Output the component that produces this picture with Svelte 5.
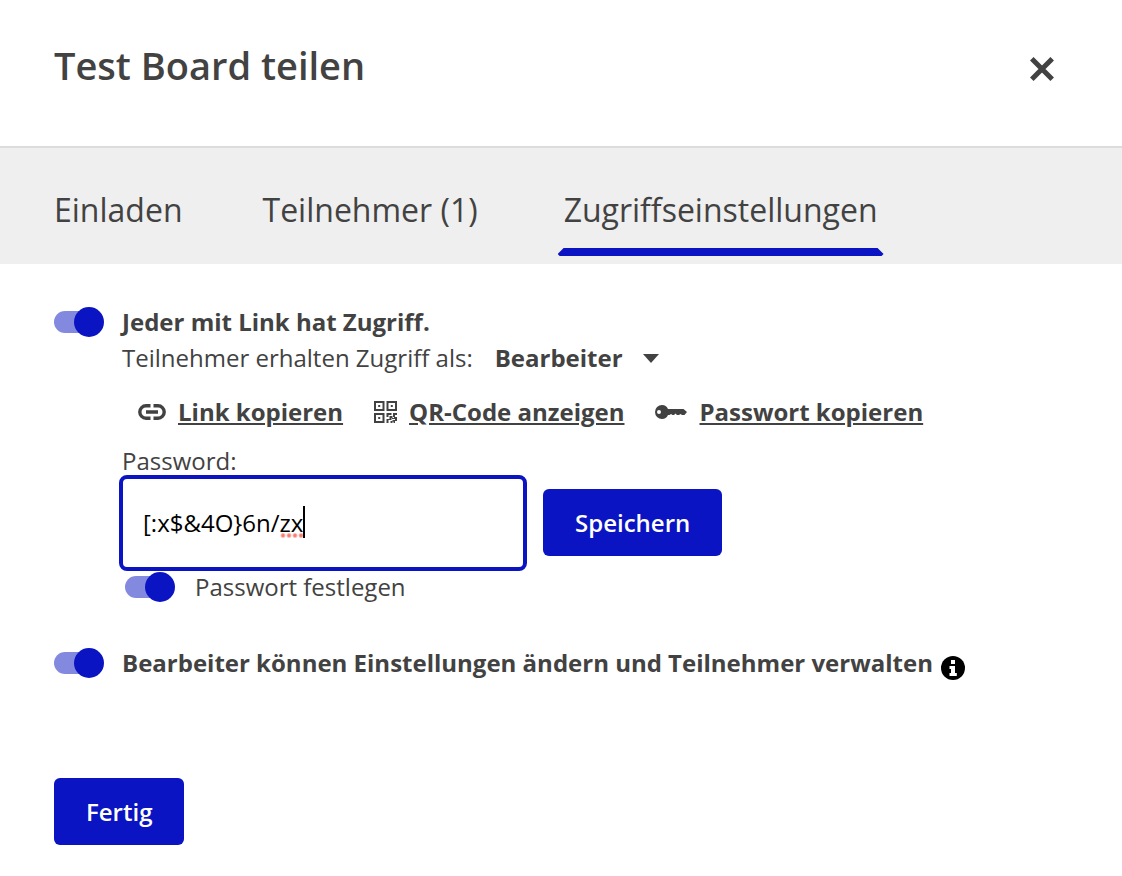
<script>
  const tabs = ['Einladen', 'Teilnehmer (1)', 'Zugriffseinstellungen'];
  let activeTab = $state('Zugriffseinstellungen');
  let linkAccess = $state(true);
  let role = $state('Bearbeiter');
  let password = $state('[:x$&4O}6n/zx');
  let passwordEnabled = $state(true);
  let editorsManage = $state(true);

  // The last word of the value carries the spelling mark.
  let lastWord = $derived(password.match(/[a-z]*$/)[0]);
  let leading = $derived(password.slice(0, password.length - lastWord.length));
</script>

<main class="dialog">
  <header class="head">
    <h1>Test Board teilen</h1>
    <button class="close" type="button" aria-label="Schließen">
      <svg viewBox="0 0 24 24" width="24" height="24" aria-hidden="true">
        <path d="M1.8 1.8 22.2 22.2M22.2 1.8 1.8 22.2" stroke="currentColor" stroke-width="5" fill="none" />
      </svg>
    </button>
  </header>

  <nav class="tabs">
    {#each tabs as tab}
      <button type="button" class="tab" class:active={tab === activeTab} onclick={() => (activeTab = tab)}>{tab}</button>
    {/each}
  </nav>

  <section class="content">
    <div class="setting">
      <input id="link-access" class="switch" type="checkbox" bind:checked={linkAccess} />
      <div class="body">
        <label class="line strong" for="link-access">Jeder mit Link hat Zugriff.</label>
        <div class="line role">
          <label for="role">Teilnehmer erhalten Zugriff als:</label>
          <span class="picker">
            <select id="role" bind:value={role}>
              <option>Bearbeiter</option>
              <option>Leser</option>
            </select>
            <svg viewBox="0 0 16 9" width="16" height="9" aria-hidden="true"><path d="M0 0h16L8 9z" fill="currentColor" /></svg>
          </span>
        </div>

        <div class="links">
          <a href="#link">
            <svg viewBox="0 0 28 16" width="28" height="16" aria-hidden="true">
              <path d="M12.5 1.8H8a6.2 6.2 0 0 0 0 12.4h4.5M15.5 1.8H20a6.2 6.2 0 0 1 0 12.4h-4.5M8 8h12" fill="none" stroke="currentColor" stroke-width="3.4" />
            </svg>
            <span>Link kopieren</span>
          </a>
          <a href="#qr">
            <svg viewBox="0 0 23 22" width="23" height="22" aria-hidden="true">
              <path d="M1 1h8.500v8H1zM13.500 1H22v8h-8.500zM1 13h8.500v8H1z" fill="none" stroke="currentColor" stroke-width="2" />
              <path fill="currentColor" d="M4.200 4h2v2h-2zM16.800 4h2v2h-2zM4.200 16h2v2h-2zM12.500 12h5v2h-3v2h-2zM19 12h4v2h-2v2h-2zM15.500 15h3v2h-1v2h-3v3h-2v-4h3zM20 16h3v4h-2v-2h-3v-1h2zM16.500 20h2v2h-2zM18.500 19h2.500v3h-1.500v-1.500h-1z" />
            </svg>
            <span>QR-Code anzeigen</span>
          </a>
          <a href="#password">
            <svg viewBox="0 0 32 14" width="32" height="14" aria-hidden="true">
              <path fill="currentColor" fill-rule="evenodd" d="M7 0c2.900 0 4.900 1.500 6 4h15.500L32 7l-2.500 3H27l-1.500-1-1.500 1h-2l-1.500-1.500L19 10h-1.500L16 9l-1.500 1H13c-1.100 2.500-3.100 4-6 4a7 7 0 0 1 0-14ZM4 5a2 2 0 1 0 0 4 2 2 0 0 0 0-4Z" />
            </svg>
            <span>Passwort kopieren</span>
          </a>
        </div>

        <label class="caption" for="password">Password:</label>
        <div class="entry">
          <div class="field">
            <input id="password" type="text" spellcheck="false" autocomplete="off" bind:value={password} />
            <div class="marks" aria-hidden="true"><span class="ghost">{leading}</span><span class="misspelt"><span class="ghost">{lastWord}</span></span><i class="caret"></i></div>
          </div>
          <button class="primary" type="button">Speichern</button>
        </div>
        <div class="protect">
          <input id="protect" class="switch" type="checkbox" bind:checked={passwordEnabled} />
          <label for="protect">Passwort festlegen</label>
        </div>
      </div>
    </div>

    <div class="setting manage">
      <input id="manage" class="switch" type="checkbox" bind:checked={editorsManage} />
      <div class="body titled">
        <label class="strong" for="manage">Bearbeiter können Einstellungen ändern und Teilnehmer verwalten</label>
        <svg class="info" viewBox="0 0 24 24" width="24" height="24" role="img" aria-label="Info">
          <circle cx="12" cy="12" r="12" fill="#000" />
          <path fill="#fff" d="M10 4h4v4h-4zM8.500 10H14v7h1.800v3H8.500v-3H10v-4H8.500z" />
        </svg>
      </div>
    </div>
  </section>

  <footer>
    <button class="primary" type="button">Fertig</button>
  </footer>
</main>

<style>
  :global(body) {
    margin: 0;
    background: #fff;
  }
  .dialog {
    font-family: 'Open Sans', sans-serif;
    font-size: 24px;
    line-height: 36px;
    color: #424242;
  }
  button,
  input,
  select {
    font: inherit;
    color: inherit;
    margin: 0;
    padding: 0;
    border: 0;
    background: none;
  }
  button {
    cursor: pointer;
  }
  svg {
    display: block;
    flex: none;
  }
  .head {
    display: flex;
    justify-content: space-between;
    align-items: flex-start;
    padding: 37px 56px 53px 54px;
    border-bottom: 2px solid #dcdcdc;
  }
  h1 {
    margin: 0;
    font-size: 38px;
    line-height: 56px;
    font-weight: 600;
  }
  .close {
    padding: 8px;
    margin-top: 12px;
    margin-right: 4px;
  }
  .tabs {
    display: flex;
    gap: 68px;
    padding: 28px 48px 8px;
    background: #efefef;
  }
  .tab {
    position: relative;
    padding: 10px 6px 22px;
    font-size: 32px;
    line-height: 48px;
    white-space: nowrap;
  }
  .tab.active {
    margin-left: 6px;
  }
  .tab.active::after {
    content: '';
    position: absolute;
    left: 0;
    right: 0;
    bottom: 0;
    height: 8px;
    background: #0a14c2;
    clip-path: polygon(6px 0, calc(100% - 6px) 0, 100% 6px, calc(100% - 2px) 100%, 2px 100%, 0 6px);
  }
  .content {
    padding: 40px 54px 0;
  }
  .setting {
    display: flex;
    align-items: flex-start;
    gap: 18px;
  }
  .switch {
    appearance: none;
    position: relative;
    flex: none;
    width: 50px;
    height: 30px;
    margin-top: 3px;
    cursor: pointer;
  }
  .switch::before {
    content: '';
    position: absolute;
    inset: 4px 4px 4px 0;
    border-radius: 11px;
    background: #b4b4b4;
  }
  .switch::after {
    content: '';
    position: absolute;
    left: 0;
    top: 0;
    width: 30px;
    height: 30px;
    border-radius: 50%;
    background: #777;
  }
  .switch:checked::before {
    background: #8489e0;
  }
  .switch:checked::after {
    left: 20px;
    background: #0a14c2;
  }
  .body {
    flex: 1;
    min-width: 0;
  }
  .line {
    display: block;
  }
  .strong {
    font-weight: 700;
  }
  .role {
    display: flex;
    gap: 22px;
  }
  .picker {
    display: grid;
    align-items: center;
  }
  .picker > * {
    grid-area: 1 / 1;
  }
  .picker svg {
    justify-self: end;
    pointer-events: none;
  }
  select {
    appearance: none;
    font-weight: 700;
    line-height: 36px;
    padding-right: 36px;
  }
  .links {
    display: flex;
    gap: 31px;
    padding: 18px 0 17px 16px;
  }
  .links a {
    display: flex;
    align-items: center;
    gap: 12px;
    color: inherit;
    font-weight: 700;
    text-decoration: none;
    white-space: nowrap;
  }
  .links span {
    text-decoration: underline;
  }
  .caption {
    display: block;
    line-height: 28px;
  }
  .entry {
    display: flex;
    align-items: center;
    gap: 16px;
    margin-left: -3px;
  }
  .field {
    position: relative;
    width: 408px;
    color: #000;
  }
  .field input {
    display: block;
    box-sizing: border-box;
    width: 100%;
    height: 96px;
    padding: 0 20px 2px;
    border: 4px solid #0a14c2;
    border-radius: 8px;
    outline: 0;
    caret-color: transparent;
  }
  .marks {
    position: absolute;
    inset: 0 24px 2px;
    display: flex;
    align-items: center;
    white-space: pre;
    pointer-events: none;
  }
  .ghost {
    visibility: hidden;
  }
  .misspelt {
    background: radial-gradient(circle, #f87a70 1px, #f87a7000 3px) 0 calc(100% - 2px) / 6px 5px repeat-x;
  }
  .caret {
    width: 2px;
    height: 32px;
    background: #000;
  }
  .primary {
    padding: 16px 32px 15px;
    border-radius: 6px;
    background: #0a14c2;
    color: #fff;
    font-weight: 600;
  }
  .entry .primary {
    margin-bottom: 2px;
  }
  .protect {
    display: flex;
    gap: 20px;
    padding-left: 3px;
    line-height: 32px;
  }
  .protect .switch {
    margin-top: 1px;
  }
  .manage {
    margin-top: 42px;
  }
  .titled {
    display: flex;
    align-items: center;
    gap: 8px;
  }
  .info {
    margin-top: 10px;
  }
  footer {
    padding: 97px 54px 30px;
  }
</style>
